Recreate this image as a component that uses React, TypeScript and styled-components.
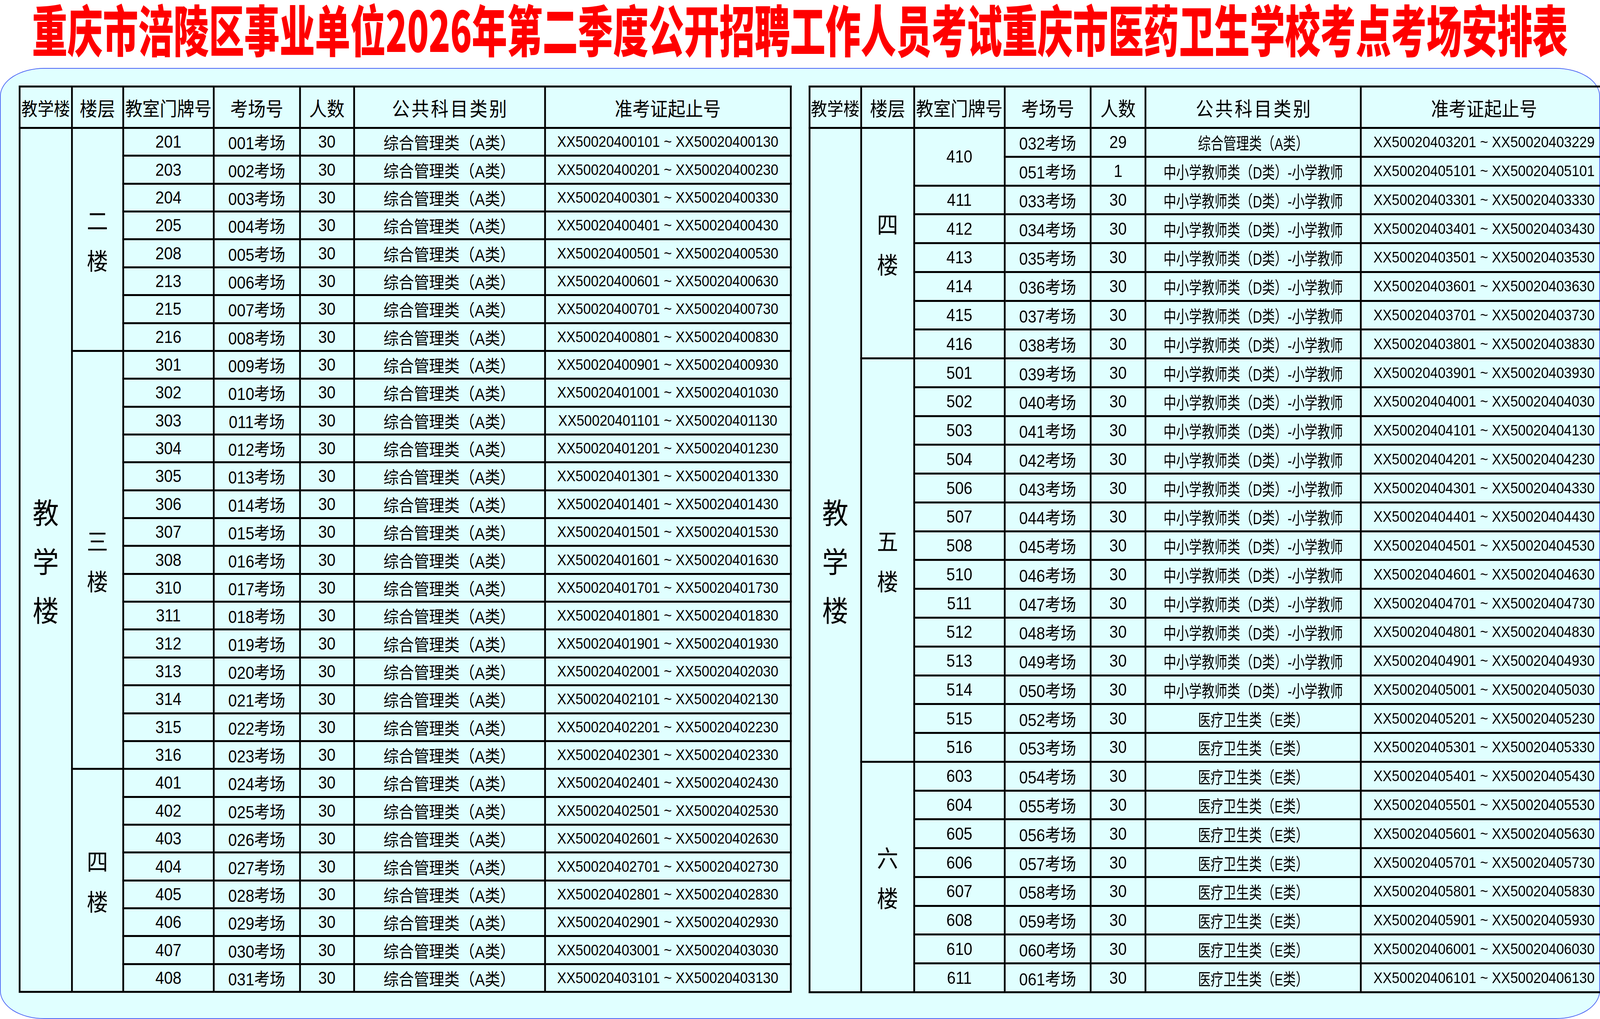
import React, { useEffect, useState } from "react";
import styled, { createGlobalStyle } from "styled-components";

const DESIGN_WIDTH = 4525;
const DESIGN_HEIGHT = 2609;

const GlobalStyle = createGlobalStyle`
  html, body {
    margin: 0;
    padding: 0;
    background: #ffffff;
    overflow: hidden;
  }
  body {
    font-family: "Liberation Sans", "Noto Sans CJK SC", sans-serif;
    color: #000000;
    text-spacing-trim: space-all;
  }
`;

const Viewport = styled.div`
  width: 100vw;
  height: 100vh;
  overflow: hidden;
`;

const Page = styled.div`
  width: 4525px;
  height: 2609px;
  overflow: hidden;
  display: flex;
  flex-direction: column;
  transform-origin: 0 0;
`;

const TitleBar = styled.div`
  height: 174px;
  flex: none;
  box-sizing: border-box;
  padding-top: 28px;
  display: flex;
  justify-content: center;
  align-items: flex-start;
`;

const TitleText = styled.h1`
  margin: 0;
  flex: none;
  white-space: nowrap;
  font-family: "Noto Sans CJK SC", sans-serif;
  font-weight: 900;
  font-size: 100px;
  line-height: 88px;
  color: #ff0000;
  transform: scaleY(1.42);
`;

const Panel = styled.div`
  flex: 1;
  box-sizing: border-box;
  background: #e0ffff;
  border: 2px solid #4a63f5;
  border-radius: 125px / 72px;
  padding: 43px 0 0 51px;
  display: flex;
  align-items: flex-start;
  gap: 48px;
`;

const Sheet = styled.table`
  flex: none;
  border-collapse: collapse;
  table-layout: fixed;
  border: 5px solid #000000;
`;

const HeadRow = styled.tr`
  height: 106px;
`;

const DataRow = styled.tr<{ $h: number }>`
  height: ${(p) => p.$h}px;
`;

const HeadCell = styled.th<{ $size?: number; $spacing?: number }>`
  border: 5px solid #000000;
  padding: 0 0 0 ${(p) => p.$spacing ?? 0}px;
  font-family: "Noto Sans CJK SC", sans-serif;
  font-weight: 400;
  font-size: ${(p) => p.$size ?? 50}px;
  letter-spacing: ${(p) => p.$spacing ?? 0}px;
  white-space: nowrap;
  text-align: center;
  vertical-align: middle;
`;

const Cell = styled.td<{ $size?: number }>`
  border: 5px solid #000000;
  padding: 0;
  font-size: ${(p) => p.$size ?? 44}px;
  white-space: nowrap;
  text-align: center;
  vertical-align: middle;
  overflow: hidden;
`;

const IdCell = styled(Cell)`
  font-size: 39px;
`;

const Squeeze = styled.div<{ $scale: number }>`
  display: flex;
  justify-content: center;
  white-space: nowrap;
  font-size: 43px;

  & > span {
    flex: none;
    transform: scaleX(${(p) => p.$scale});
  }
`;

const StackLabel = styled.div<{ $size: number; $pitch: number }>`
  display: flex;
  flex-direction: column;
  align-items: center;
  font-family: "Noto Sans CJK SC", sans-serif;
  font-size: ${(p) => p.$size}px;
  line-height: ${(p) => p.$pitch}px;
`;

type Row = {
  room: string;
  exam: string;
  count: number;
  cat: string;
  roomSpan?: number;
  skipRoom?: boolean;
};

type Floor = { label: string; rows: Row[] };

type SheetConfig = {
  cols: number[];
  rowHeight: number;
  catScale: number;
  floors: Floor[];
};

const A = "综合管理类（A类）";
const D = "中小学教师类（D类）-小学教师";
const E = "医疗卫生类（E类）";

const rows = (pairs: string[][], cat: string): Row[] =>
  pairs.map(([room, exam]) => ({ room, exam, count: 30, cat }));

const idRange = (exam: string, count: number) =>
  `XX500204${exam}01 ~ XX500204${exam}${String(count).padStart(2, "0")}`;

const leftSheet: SheetConfig = {
  cols: [147.5, 145, 256.5, 243.5, 153, 540, 695],
  rowHeight: 71.37,
  catScale: 1,
  floors: [
    {
      label: "二楼",
      rows: rows(
        [
          ["201", "001"], ["203", "002"], ["204", "003"], ["205", "004"],
          ["208", "005"], ["213", "006"], ["215", "007"], ["216", "008"],
        ],
        A
      ),
    },
    {
      label: "三楼",
      rows: rows(
        [
          ["301", "009"], ["302", "010"], ["303", "011"], ["304", "012"],
          ["305", "013"], ["306", "014"], ["307", "015"], ["308", "016"],
          ["310", "017"], ["311", "018"], ["312", "019"], ["313", "020"],
          ["314", "021"], ["315", "022"], ["316", "023"],
        ],
        A
      ),
    },
    {
      label: "四楼",
      rows: rows(
        [
          ["401", "024"], ["402", "025"], ["403", "026"], ["404", "027"],
          ["405", "028"], ["406", "029"], ["407", "030"], ["408", "031"],
        ],
        A
      ),
    },
  ],
};

const rightSheet: SheetConfig = {
  cols: [146.5, 149.5, 256.5, 243, 155, 534, 696.5],
  rowHeight: 73.77,
  catScale: 0.84,
  floors: [
    {
      label: "四楼",
      rows: [
        { room: "410", exam: "032", count: 29, cat: A, roomSpan: 2 },
        { room: "410", exam: "051", count: 1, cat: D, skipRoom: true },
        ...rows(
          [
            ["411", "033"], ["412", "034"], ["413", "035"],
            ["414", "036"], ["415", "037"], ["416", "038"],
          ],
          D
        ),
      ],
    },
    {
      label: "五楼",
      rows: [
        ...rows(
          [
            ["501", "039"], ["502", "040"], ["503", "041"], ["504", "042"],
            ["506", "043"], ["507", "044"], ["508", "045"], ["510", "046"],
            ["511", "047"], ["512", "048"], ["513", "049"], ["514", "050"],
          ],
          D
        ),
        ...rows([["515", "052"], ["516", "053"]], E),
      ],
    },
    {
      label: "六楼",
      rows: rows(
        [
          ["603", "054"], ["604", "055"], ["605", "056"], ["606", "057"],
          ["607", "058"], ["608", "059"], ["610", "060"], ["611", "061"],
        ],
        E
      ),
    },
  ],
};

const Stack = ({ text, size, pitch }: { text: string; size: number; pitch: number }) => (
  <StackLabel $size={size} $pitch={pitch}>
    {text.split("").map((ch, i) => (
      <span key={i}>{ch}</span>
    ))}
  </StackLabel>
);

const ExamSheet = ({ config }: { config: SheetConfig }) => {
  const total = config.floors.reduce((n, f) => n + f.rows.length, 0);
  return (
    <Sheet>
      <colgroup>
        {config.cols.map((w, i) => (
          <col key={i} style={{ width: w }} />
        ))}
      </colgroup>
      <thead>
        <HeadRow>
          <HeadCell $size={46}>教学楼</HeadCell>
          <HeadCell>楼层</HeadCell>
          <HeadCell $size={49}>教室门牌号</HeadCell>
          <HeadCell>考场号</HeadCell>
          <HeadCell>人数</HeadCell>
          <HeadCell $spacing={5}>公共科目类别</HeadCell>
          <HeadCell>准考证起止号</HeadCell>
        </HeadRow>
      </thead>
      <tbody>
        {config.floors.map((floor, fi) =>
          floor.rows.map((r, ri) => (
            <DataRow key={`${fi}-${ri}`} $h={config.rowHeight}>
              {fi === 0 && ri === 0 && (
                <Cell rowSpan={total}>
                  <Stack text="教学楼" size={74} pitch={125} />
                </Cell>
              )}
              {ri === 0 && (
                <Cell rowSpan={floor.rows.length}>
                  <Stack text={floor.label} size={60} pitch={103} />
                </Cell>
              )}
              {!r.skipRoom && <Cell rowSpan={r.roomSpan ?? 1}>{r.room}</Cell>}
              <Cell>{r.exam}考场</Cell>
              <Cell>{r.count}</Cell>
              <Cell>
                <Squeeze $scale={config.catScale}>
                  <span>{r.cat}</span>
                </Squeeze>
              </Cell>
              <IdCell>{idRange(r.exam, r.count)}</IdCell>
            </DataRow>
          ))
        )}
      </tbody>
    </Sheet>
  );
};

// the window may be narrower than the 4525px design: stretch it onto the real frame
const useFit = () => {
  const read = () =>
    typeof window === "undefined"
      ? { x: 1, y: 1 }
      : { x: window.innerWidth / DESIGN_WIDTH, y: window.innerHeight / DESIGN_HEIGHT };
  const [scale, setScale] = useState(read);
  useEffect(() => {
    const onResize = () => setScale(read());
    window.addEventListener("resize", onResize);
    return () => window.removeEventListener("resize", onResize);
  }, []);
  return scale;
};

export default function App() {
  const { x, y } = useFit();
  return (
    <>
      <GlobalStyle />
      <Viewport>
        <Page style={{ transform: `scale(${x}, ${y})` }}>
          <TitleBar>
            <TitleText>重庆市涪陵区事业单位2026年第二季度公开招聘工作人员考试重庆市医药卫生学校考点考场安排表</TitleText>
          </TitleBar>
          <Panel>
            <ExamSheet config={leftSheet} />
            <ExamSheet config={rightSheet} />
          </Panel>
        </Page>
      </Viewport>
    </>
  );
}
